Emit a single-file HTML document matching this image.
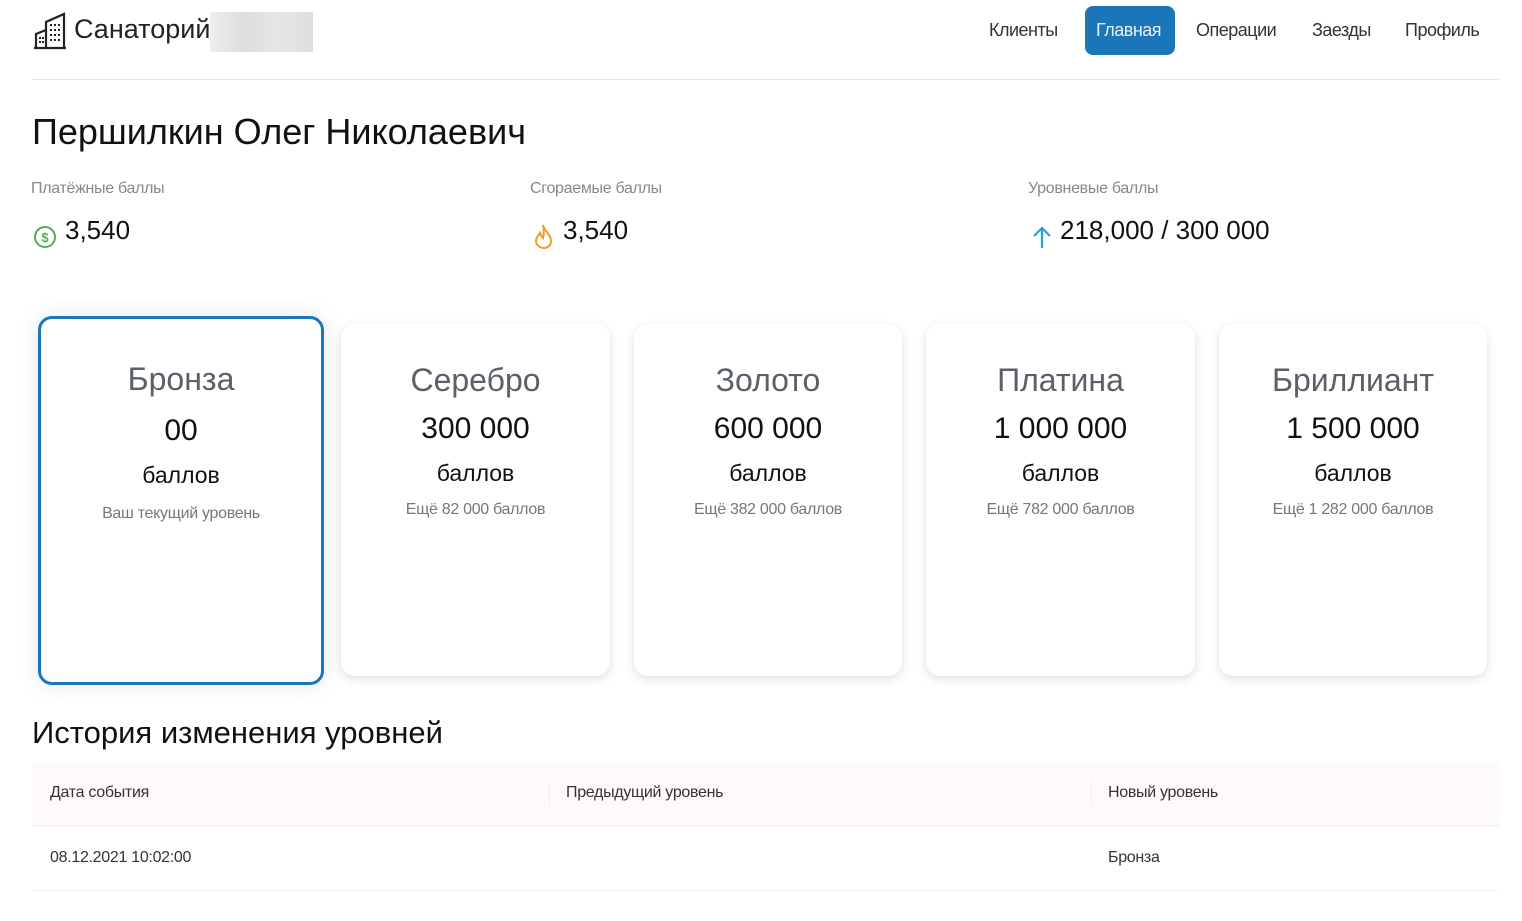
<!DOCTYPE html>
<html><head><meta charset="utf-8"><style>
*{box-sizing:border-box;margin:0;padding:0}
body{width:1522px;height:921px;background:#fff;font-family:"Liberation Sans",sans-serif;color:#222;position:relative;overflow:hidden}
.a{position:absolute;white-space:nowrap}
.nav{font-size:18px;color:#333;letter-spacing:-0.5px}
.card{position:absolute;background:#fff;border-radius:14px;box-shadow:0 3px 10px rgba(0,0,0,0.13);text-align:center}
.card .t{position:absolute;left:0;right:0;font-size:32px;color:#5a6068}
.card .n{position:absolute;left:0;right:0;font-size:30px;color:#111}
.card .b{position:absolute;left:0;right:0;font-size:23px;color:#111}
.card .s{position:absolute;left:0;right:0;font-size:16px;color:#777;letter-spacing:-0.3px}
.lbl{font-size:16px;color:#888;letter-spacing:-0.3px}
.val{font-size:26px;color:#111}
.th{font-size:16px;color:#333;letter-spacing:-0.3px}
</style></head><body>
<svg class="a" style="left:32px;top:12px" width="36" height="38" viewBox="0 0 36 38" fill="none" stroke="#222" stroke-width="2.2">
<path d="M2 36 H34 M4 36 V22 L14 18 V36 M14 36 V10 L32 2 V36"/>
<g fill="#222" stroke="none"><rect x="7" y="25" width="2" height="2"/><rect x="10" y="25" width="2" height="2"/><rect x="7" y="29" width="2" height="2"/><rect x="10" y="29" width="2" height="2"/>
<rect x="18" y="12" width="2" height="2"/><rect x="22" y="12" width="2" height="2"/><rect x="26" y="12" width="2" height="2"/>
<rect x="18" y="17" width="2" height="2"/><rect x="22" y="17" width="2" height="2"/><rect x="26" y="17" width="2" height="2"/>
<rect x="18" y="22" width="2" height="2"/><rect x="22" y="22" width="2" height="2"/><rect x="26" y="22" width="2" height="2"/>
<rect x="18" y="27" width="2" height="2"/><rect x="22" y="27" width="2" height="2"/><rect x="26" y="27" width="2" height="2"/></g></svg>
<div class="a" style="left:74px;top:14px;font-size:27px;color:#222">Санаторий</div>
<div class="a" style="left:210px;top:12px;width:103px;height:40px;background:linear-gradient(90deg,#eee,#ddd,#e6e6e6,#ddd)"></div>
<div class="a nav" style="left:989px;top:20px">Клиенты</div>
<div class="a" style="left:1085px;top:6px;width:90px;height:49px;background:#1a76b8;border-radius:8px"></div>
<div class="a nav" style="left:1096px;top:20px;color:#e8f0f8">Главная</div>
<div class="a nav" style="left:1196px;top:20px">Операции</div>
<div class="a nav" style="left:1312px;top:20px">Заезды</div>
<div class="a nav" style="left:1405px;top:20px">Профиль</div>
<div class="a" style="left:32px;top:79px;width:1467px;height:1px;background:#e2e6e8"></div>

<div class="a" style="left:32px;top:111px;font-size:36px;color:#111">Першилкин Олег Николаевич</div>
<div class="a lbl" style="left:31px;top:180px">Платёжные баллы</div>
<div class="a lbl" style="left:530px;top:180px">Сгораемые баллы</div>
<div class="a lbl" style="left:1028px;top:180px">Уровневые баллы</div>
<svg class="a" style="left:33px;top:224px" width="26" height="26" viewBox="0 0 26 26"><circle cx="12" cy="13" r="10" fill="none" stroke="#4cb050" stroke-width="2"/><text x="12" y="18" font-size="13" text-anchor="middle" fill="#4cb050" font-family="Liberation Sans" font-weight="bold">$</text></svg>
<div class="a val" style="left:65px;top:215px">3,540</div>
<svg class="a" style="left:532px;top:222px" width="24" height="28" viewBox="0 0 24 28"><path d="M11 3 C12 9 19 12 19 19 C19 23 16 26 12 26 C8 26 4 23 4 19 C4 15 7 13 8 11 C9 14 10 15 11 16 C12 12 12 7 11 3 Z" fill="none" stroke="#f59a23" stroke-width="2"/></svg>
<div class="a val" style="left:563px;top:215px">3,540</div>
<svg class="a" style="left:1030px;top:224px" width="24" height="26" viewBox="0 0 24 26"><path d="M12 24 V4 M4 12 L12 4 L20 12" fill="none" stroke="#2aa0d8" stroke-width="2.2"/></svg>
<div class="a val" style="left:1060px;top:215px">218,000 / 300 000</div>

<div class="card" style="left:38px;top:316px;width:286px;height:369px;border:3px solid #1a76b8;box-shadow:0 0 22px rgba(30,60,120,0.12)">
<div class="t" style="top:42px">Бронза</div><div class="n" style="top:95px">00</div><div class="b" style="top:143px">баллов</div><div class="s" style="top:186px">Ваш текущий уровень</div></div>
<div class="card" style="left:341px;top:324px;width:269px;height:352px">
<div class="t" style="top:38px">Серебро</div><div class="n" style="top:88px">300 000</div><div class="b" style="top:136px">баллов</div><div class="s" style="top:177px">Ещё 82 000 баллов</div></div>
<div class="card" style="left:634px;top:324px;width:268px;height:352px">
<div class="t" style="top:38px">Золото</div><div class="n" style="top:88px">600 000</div><div class="b" style="top:136px">баллов</div><div class="s" style="top:177px">Ещё 382 000 баллов</div></div>
<div class="card" style="left:926px;top:324px;width:269px;height:352px">
<div class="t" style="top:38px">Платина</div><div class="n" style="top:88px">1 000 000</div><div class="b" style="top:136px">баллов</div><div class="s" style="top:177px">Ещё 782 000 баллов</div></div>
<div class="card" style="left:1219px;top:324px;width:268px;height:352px">
<div class="t" style="top:38px">Бриллиант</div><div class="n" style="top:88px">1 500 000</div><div class="b" style="top:136px">баллов</div><div class="s" style="top:177px">Ещё 1 282 000 баллов</div></div>

<div class="a" style="left:32px;top:715px;font-size:31px;color:#111">История изменения уровней</div>
<div class="a" style="left:32px;top:762px;width:1467px;height:64px;background:#fdf9fc;border-bottom:1px solid #f0f0f0"></div>
<div class="a" style="left:549px;top:781px;width:1px;height:24px;background:#eee"></div>
<div class="a" style="left:1091px;top:781px;width:1px;height:24px;background:#eee"></div>
<div class="a th" style="left:50px;top:784px">Дата события</div>
<div class="a th" style="left:566px;top:784px">Предыдущий уровень</div>
<div class="a th" style="left:1108px;top:784px">Новый уровень</div>
<div class="a th" style="left:50px;top:849px">08.12.2021 10:02:00</div>
<div class="a th" style="left:1108px;top:849px">Бронза</div>
<div class="a" style="left:32px;top:890px;width:1467px;height:1px;background:#f0f0f0"></div>
</body></html>
